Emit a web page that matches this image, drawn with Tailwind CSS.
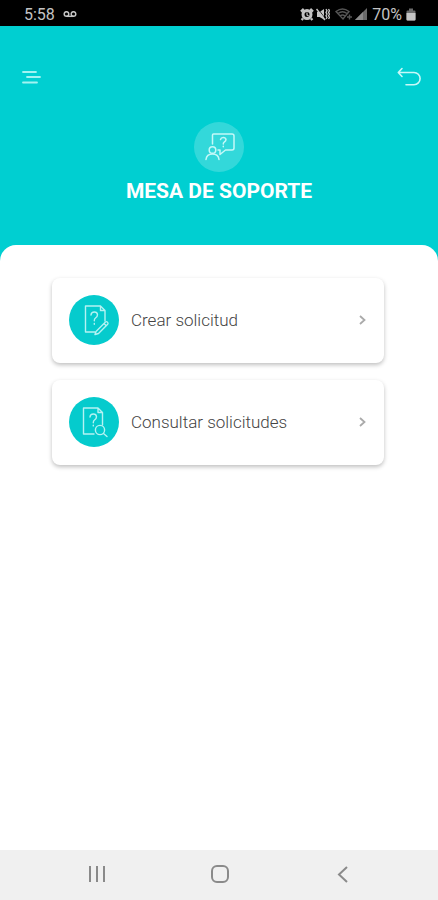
<!DOCTYPE html>
<html lang="es">
<head>
<meta charset="utf-8">
<meta name="viewport" content="width=device-width, initial-scale=1">
<title>Mesa de soporte</title>
<script src="https://cdn.jsdelivr.net/npm/@tailwindcss/browser@4"></script>
</head>
<body class="flex min-h-screen flex-col bg-[#00cfd1] font-['Roboto',sans-serif]">
  <div class="flex h-[26px] items-center justify-between bg-black pr-[22px] pl-6 pt-[3px] text-base text-[#c4c4c4]">
    <div class="flex items-center gap-2">
      <span>5:58</span>
      <svg class="h-2 w-[14px]" viewBox="0 0 14 8" fill="none" stroke="currentColor" stroke-width="1.5"><circle cx="3.5" cy="3" r="2.3"/><circle cx="10.5" cy="3" r="2.3"/><path d="M3.5 5.300h7"/></svg>
    </div>
    <div class="flex items-center gap-[2px]">
      <svg class="ml-[2px] h-[14px] w-[14px]" viewBox="0 0 14 14" fill="none" stroke="currentColor"><circle cx="7" cy="6.500" r="4" stroke-width="3"/><path d="M1 3.600 3.800 1M13 3.600 10.200 1M3 10.500 1.600 12M11 10.500l1.400 1.500" stroke-width="2.400"/><path d="M7 4.500V7l1.600 1" stroke-width="1.200"/></svg>
      <svg class="h-[14px] w-[14px]" viewBox="0 0 14 14" fill="none" stroke="currentColor"><path d="M1 4h2.500L8 1v10.500L3.500 9H1z" fill="currentColor" stroke="none"/><path d="m2.500 1.500 6 8" stroke="#000" stroke-width=".8"/><path d="m.5 1 8.500 11" stroke-width="1.500"/><path d="m10 1 1 1.700-1 1.700 1 1.700-1 1.700 1 1.700-1 1.500M12.500 1l1 1.700-1 1.700 1 1.700-1 1.700 1 1.700-1 1.500" stroke-width="1.300"/></svg>
      <svg class="ml-[3px] h-[14px] w-[18px] text-[#555]" viewBox="0 0 18 14" fill="none" stroke="currentColor" stroke-width="1.400"><path d="M1 3.500Q7.500-1.500 14 3.500L8 11zM3 5.500q4.500-3.500 9 0M5 8q2.500-2 5 0"/><path d="M12 9h5M14.500 6.500v5"/></svg>
      <svg class="h-[14px] w-3" viewBox="0 0 12 14"><path d="M0 12 12 0v12z" fill="#6a6a6a"/><path d="M0 12 8 4v8z" fill="#8a8a8a"/></svg>
      <span class="ml-[3px]">70%</span>
      <svg class="ml-[2px] h-[14px] w-[10px]" viewBox="0 0 10 14" fill="currentColor"><path d="M3 .5h4v2h1.500q1 0 1 1v8q0 1-1 1h-7q-1 0-1-1v-8q0-1 1-1H3z" opacity=".55"/><path d="M.5 5h9v6.500q0 1-1 1h-7q-1 0-1-1z"/></svg>
    </div>
  </div>

  <header class="pb-[39px] text-white">
    <nav class="flex items-center justify-between px-[15px] pt-[35px]">
      <button type="button" aria-label="Menú" class="flex h-8 w-8 items-center justify-center">
        <svg class="h-5 w-5" viewBox="0 0 20 20" fill="none" stroke="#a3f3f2" stroke-width="1.800" stroke-linecap="round"><path d="M2 5h13M6 10h13M2 15.500h14"/></svg>
      </button>
      <button type="button" aria-label="Volver" class="flex h-8 w-7 items-center justify-center">
        <svg class="h-6 w-6 shrink-0" viewBox="0 0 24 24" fill="none" stroke="#c9f8f8" stroke-width="1.600" stroke-linecap="round" stroke-linejoin="round"><path d="M5 3.500 1.300 7.500 5 11.500M1.500 7.500H17a6.100 6.100 0 0 1 0 12.200H9"/></svg>
      </button>
    </nav>
    <div class="flex flex-col items-center gap-[5px] pt-[29px]">
      <div class="flex h-[50px] w-[50px] items-center justify-center rounded-full bg-white/20">
        <svg class="h-8 w-8" viewBox="0 0 32 32" fill="none" stroke="#c5f8f8" stroke-width="1.500" stroke-linejoin="round" stroke-linecap="round"><path d="M9.500 13V4q0-1 1-1H29q2 0 2 2v12q0 2-2 2h-6.500L17 23.500V19h-2"/><circle cx="9.500" cy="19" r="3.300"/><path d="M3 28.500q.5-5.500 6.500-5.500t6.500 5.500"/><path d="M17.500 8.500q.5-2 2.800-2t2.700 2q0 1.500-1.700 2.500-1 .7-1 1.900M20.300 15.200v.5"/></svg>
      </div>
      <h1 class="text-[21px] leading-[29px] font-bold">MESA DE SOPORTE</h1>
    </div>
  </header>

  <main class="flex flex-1 flex-col gap-[17px] rounded-t-[16px] bg-white pr-[54px] pl-[52px] pt-[33px]">
    <a href="#crear" class="flex h-[85px] items-center rounded-lg bg-white pr-4 pb-[2px] pl-[17px] shadow-[0_2px_4px_rgba(0,0,0,0.25)]">
      <span class="flex h-[50px] w-[50px] items-center justify-center rounded-full bg-[#05cbcd]">
        <svg class="h-8 w-8" viewBox="0 0 32 32" fill="none" stroke="#b5f2f2" stroke-width="1.400" stroke-linejoin="round" stroke-linecap="round"><path d="M17 28H7.500V2h15L27 6.500V17M22.500 2v4.500H27"/><path d="M13 11q.3-3 3.300-3t3.200 2.800q0 1.900-2 3.200-1.200.8-1.200 2.700M16.300 19.500v.7"/><path d="m18 27.500 9.500-9.500q1-.8 2 .2t.2 2L20.500 29.500l-3.500 1zM26 19.500l2.300 2.300"/></svg>
      </span>
      <span class="ml-3 flex-1 pt-[2px] text-[17px] font-light text-[#444]">Crear solicitud</span>
      <svg class="h-[10px] w-[10px]" viewBox="0 0 10 10" fill="none" stroke="#aaa" stroke-width="1.800"><path d="m2 1 4.500 4L2 9"/></svg>
    </a>
    <a href="#consultar" class="flex h-[85px] items-center rounded-lg bg-white pr-4 pb-[1px] pl-[17px] shadow-[0_2px_4px_rgba(0,0,0,0.25)]">
      <span class="flex h-[50px] w-[50px] items-center justify-center rounded-full bg-[#05cbcd]">
        <svg class="h-8 w-8" viewBox="0 0 32 32" fill="none" stroke="#b5f2f2" stroke-width="1.400" stroke-linejoin="round" stroke-linecap="round"><path d="M16 28H5.500V2h14.500l4.500 4.500V19M20 2v4.500h4.500"/><path d="M12 11q.3-3 3.300-3t3.200 2.800q0 1.900-2 3.200-1.200.8-1.200 2.700M15.300 19.200v.7"/><circle cx="22" cy="24" r="4.600"/><path d="m25.500 27.500 3.500 3"/></svg>
      </span>
      <span class="ml-3 flex-1 pt-[2px] text-[17px] font-light text-[#444]">Consultar solicitudes</span>
      <svg class="h-[10px] w-[10px]" viewBox="0 0 10 10" fill="none" stroke="#aaa" stroke-width="1.800"><path d="m2 1 4.500 4L2 9"/></svg>
    </a>
  </main>

  <div class="flex h-[50px] items-center justify-around bg-[#f0f0f0] pr-[34px] pl-9 text-[#8a8a8a]">
    <button type="button" aria-label="Recientes"><svg class="h-5 w-5" viewBox="0 0 20 20" fill="none" stroke="currentColor" stroke-width="2"><path d="M3 1v16M10 1v16M17 1v16"/></svg></button>
    <button type="button" aria-label="Inicio"><svg class="h-5 w-5" viewBox="0 0 20 20" fill="none" stroke="currentColor" stroke-width="2"><rect x="2" y="1" width="16" height="16" rx="5"/></svg></button>
    <button type="button" aria-label="Atrás"><svg class="h-5 w-5" viewBox="0 0 20 20" fill="none" stroke="currentColor" stroke-width="2"><path d="m14 2-8 7.500 8 7.500"/></svg></button>
  </div>
</body>
</html>
